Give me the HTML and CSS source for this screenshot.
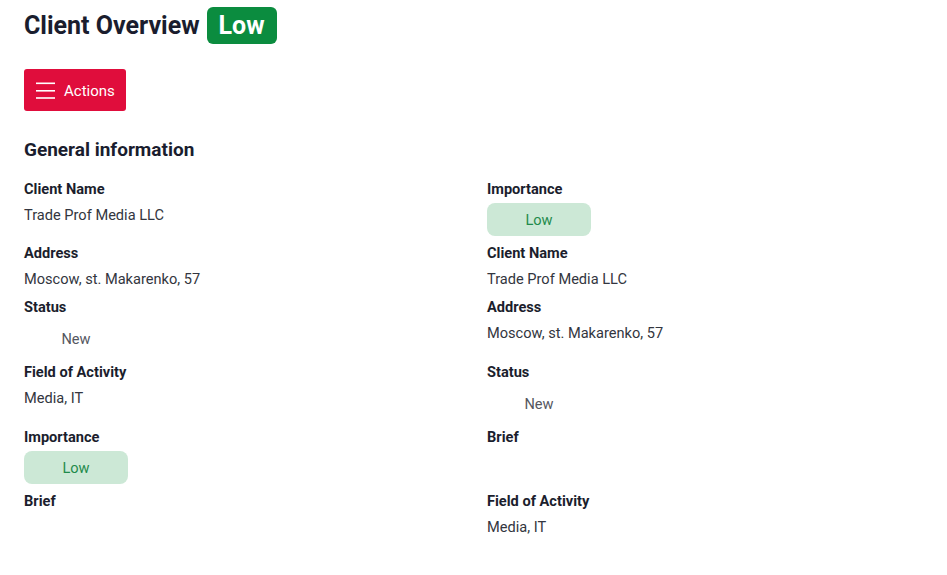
FILE: index.html
```html
<!DOCTYPE html>
<html lang="en">
<head>
<meta charset="utf-8">
<title>Client Overview</title>
<link rel="stylesheet" href="styles.css">
</head>
<body>
<div class="page">
  <div class="header">
    <h1 class="title">Client Overview</h1>
    <span class="badge">Low</span>
  </div>
  <button class="actions" type="button">
    <svg class="menu-icon" width="19" height="17" viewBox="0 0 19 17" aria-hidden="true">
      <rect x="0" y="0.5" width="19" height="1.6" fill="#fff"/>
      <rect x="0" y="8" width="19" height="1.6" fill="#fff"/>
      <rect x="0" y="15.2" width="19" height="1.6" fill="#fff"/>
    </svg>
    <span class="actions-text">Actions</span>
  </button>
  <h2 class="section-title">General information</h2>
  <div class="grid">
    <div class="field"><div class="label">Client Name</div><div class="value">Trade Prof Media LLC</div></div>
    <div class="field"><div class="label">Importance</div><div class="pill">Low</div></div>

    <div class="field"><div class="label">Address</div><div class="value">Moscow, st. Makarenko, 57</div></div>
    <div class="field"><div class="label">Client Name</div><div class="value">Trade Prof Media LLC</div></div>

    <div class="field"><div class="label">Status</div><div class="status">New</div></div>
    <div class="field"><div class="label">Address</div><div class="value">Moscow, st. Makarenko, 57</div></div>

    <div class="field"><div class="label">Field of Activity</div><div class="value">Media, IT</div></div>
    <div class="field"><div class="label">Status</div><div class="status">New</div></div>

    <div class="field"><div class="label">Importance</div><div class="pill">Low</div></div>
    <div class="field"><div class="label">Brief</div><div class="value"></div></div>

    <div class="field"><div class="label">Brief</div><div class="value"></div></div>
    <div class="field"><div class="label">Field of Activity</div><div class="value">Media, IT</div></div>
  </div>
</div>
</body>
</html>
```

FILE: styles.css
```css
* { box-sizing: border-box; }
html, body { margin: 0; padding: 0; background: #fff; }
body {
  font-family: Roboto, "Liberation Sans", Arial, sans-serif;
  color: #1b1e2d;
}
.page { padding: 0 24px; }
.header {
  display: flex;
  align-items: center;
  gap: 7px;
  padding-top: 7px;
}
.title {
  margin: 0;
  font-size: 25px;
  font-weight: 700;
  line-height: 37px;
  color: #1a1d2e;
}
.badge {
  display: inline-flex;
  align-items: center;
  height: 37px;
  padding: 0 12px;
  background: #0b8c3f;
  color: #fff;
  font-size: 25px;
  font-weight: 700;
  border-radius: 6px;
}
.actions {
  display: flex;
  align-items: center;
  gap: 9px;
  margin-top: 25px;
  height: 42px;
  padding: 0 11px 0 12px;
  background: #e00d3c;
  color: #fff;
  border: 0;
  border-radius: 3px;
  font-family: inherit;
  font-size: 15px;
  cursor: pointer;
}
.actions-text { padding-top: 2px; }
.menu-icon { display: block; }
.section-title {
  margin: 27px 0 17px;
  font-size: 19px;
  font-weight: 700;
  line-height: 24px;
  color: #1a1d2e;
}
.grid {
  display: grid;
  grid-template-columns: 1fr 1fr;
  column-gap: 27px;
  row-gap: 6px;
}
.field {
  display: flex;
  flex-direction: column;
  align-items: flex-start;
  gap: 5px;
}
.label {
  font-size: 14.6px;
  font-weight: 700;
  line-height: 20px;
  color: #1b1e2d;
}
.value {
  font-size: 14.6px;
  line-height: 23px;
  min-height: 23px;
  color: #333640;
}
.pill, .status {
  display: flex;
  align-items: center;
  justify-content: center;
  width: 104px;
  font-size: 14.6px;
}
.pill {
  height: 33px;
  margin: -1px 0 1px;
  background: #cce8d6;
  color: #1f8b4c;
  border-radius: 8px;
}
.status {
  height: 34px;
  color: #55575f;
}
```
